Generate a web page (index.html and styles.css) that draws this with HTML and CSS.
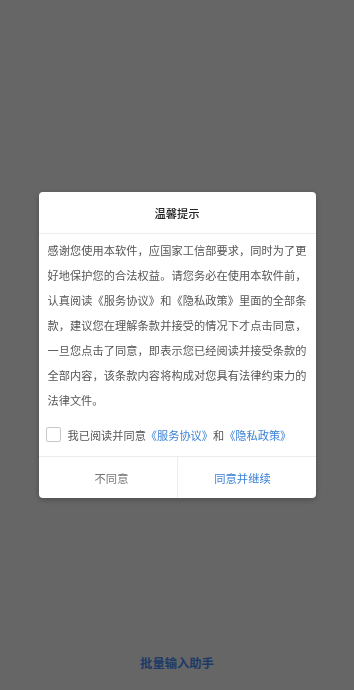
FILE: index.html
```html
<!DOCTYPE html>
<html lang="zh-CN">
<head>
<meta charset="utf-8">
<link rel="stylesheet" href="styles.css">
</head>
<body>
<div class="page">
  <div class="app-title">批量输入助手</div>
</div>
<div class="overlay">
  <div class="dialog">
    <div class="dialog-header">温馨提示</div>
    <div class="dialog-body">
      <p class="notice">感谢您使用本软件，应国家工信部要求，同时为了更好地保护您的合法权益。请您务必在使用本软件前，认真阅读《服务协议》和《隐私政策》里面的全部条款，建议您在理解条款并接受的情况下才点击同意，一旦您点击了同意，即表示您已经阅读并接受条款的全部内容，该条款内容将构成对您具有法律约束力的法律文件。</p>
      <label class="agree">
        <span class="checkbox"></span>
        <span class="agree-text">我已阅读并同意<span class="link">《服务协议》</span>和<span class="link">《隐私政策》</span></span>
      </label>
    </div>
    <div class="dialog-footer">
      <div class="btn btn-cancel">不同意</div>
      <div class="btn btn-ok">同意并继续</div>
    </div>
  </div>
</div>
</body>
</html>
```
FILE: styles.css
```css
* { box-sizing: border-box; margin: 0; padding: 0; }
html, body { width: 354px; height: 690px; overflow: hidden; }
body {
  background: #ffffff;
  font-family: "Noto Sans CJK SC", "Noto Sans", sans-serif;
}
.page {
  height: 690px;
  display: flex;
  flex-direction: column;
  justify-content: flex-end;
  align-items: center;
  padding-bottom: 18px;
}
.app-title {
  font-size: 12.3px;
  font-weight: 700;
  color: #4b92ff;
  line-height: 18px;
}
.overlay {
  position: fixed;
  inset: 0;
  background: rgba(0, 0, 0, 0.6);
  display: flex;
  align-items: center;
  justify-content: center;
}
.dialog {
  width: 277px;
  background: #ffffff;
  border-radius: 4px;
  overflow: hidden;
  box-shadow: 0 2px 6px rgba(0, 0, 0, 0.25);
}
.dialog-header {
  height: 42px;
  display: flex;
  align-items: center;
  justify-content: center;
  font-size: 11.3px;
  font-weight: 500;
  color: #222;
  border-bottom: 1px solid #ececec;
}
.dialog-body {
  padding: 4px 9px 0 9px;
}
.notice {
  font-size: 11.2px;
  line-height: 25px;
  color: #555;
  text-align: justify;
}
.agree {
  height: 43px;
  display: flex;
  align-items: center;
  gap: 7px;
  margin-left: -2px;
}
.checkbox {
  width: 15px;
  height: 15px;
  border: 1px solid #c8c8c8;
  border-radius: 2px;
  flex: none;
}
.agree-text {
  font-size: 11.2px;
  color: #555;
}
.link { color: #3b82d6; }
.dialog-footer {
  display: flex;
  height: 42px;
  border-top: 1px solid #ececec;
}
.btn {
  flex: 1;
  display: flex;
  align-items: center;
  justify-content: center;
  font-size: 11.3px;
}
.btn-cancel { color: #777; border-right: 1px solid #ececec; padding-left: 8px; }
.btn-ok { color: #3b82d6; padding-right: 8px; }
```
